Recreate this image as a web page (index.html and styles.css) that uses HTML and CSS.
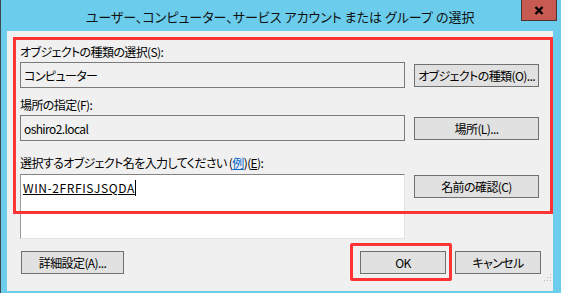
FILE: index.html
```html
<!DOCTYPE html>
<html lang="ja">
<head>
    <meta charset="UTF-8">
    <title>ユーザー、コンピューター、サービス アカウント または グループ の選択</title>
    <link rel="stylesheet" href="styles.css">
</head>
<body>
<div class="window">
    <div class="titlebar">
        <span class="title">ユーザー、コンピューター、サービス アカウント または グループ の選択</span>
        <div class="close">
            <svg width="10" height="9" viewBox="0 0 10 9">
                <path d="M1.5 1 L8.5 8 M8.5 1 L1.5 8" stroke="#000" stroke-width="2.4" />
            </svg>
        </div>
    </div>

    <div class="client">
        <div class="section first">
            <div class="label">オブジェクトの種類の選択(S):</div>
            <div class="row">
                <div class="textbox readonly">コンピューター</div>
                <button class="btn">オブジェクトの種類(O)...</button>
            </div>
        </div>

        <div class="section">
            <div class="label">場所の指定(F):</div>
            <div class="row">
                <div class="textbox readonly">oshiro2.local</div>
                <button class="btn">場所(L)...</button>
            </div>
        </div>

        <div class="section third">
            <div class="label">選択するオブジェクト名を入力してください (<a href="#" class="link">例</a>)(<u>E</u>):</div>
            <div class="row top">
                <div class="textbox multi"><span class="resolved">WIN-2FRFISJSQDA</span><span class="caret"></span></div>
                <button class="btn">名前の確認(C)</button>
            </div>
        </div>

        <div class="footer">
            <button class="btn advanced">詳細設定(A)...</button>
            <div class="actions">
                <button class="btn small">OK</button>
                <button class="btn small">キャンセル</button>
            </div>
        </div>

        <!-- 注釈の赤枠 -->
        <div class="highlight box-fields"></div>
        <div class="highlight box-ok"></div>

        <svg class="grip" width="9" height="9" viewBox="0 0 9 9">
            <rect x="7" y="1" width="1" height="1" fill="#b8b8b8" />
            <rect x="4" y="4" width="1" height="1" fill="#b8b8b8" />
            <rect x="7" y="4" width="1" height="1" fill="#b8b8b8" />
            <rect x="1" y="7" width="1" height="1" fill="#b8b8b8" />
            <rect x="4" y="7" width="1" height="1" fill="#b8b8b8" />
            <rect x="7" y="7" width="1" height="1" fill="#b8b8b8" />
        </svg>
    </div>
</div>
</body>
</html>
```

FILE: styles.css
```css
body {
    margin: 0;
    font-family: "Noto Sans CJK JP", sans-serif;
    font-feature-settings: "palt";
    color: #000;
}

.window {
    width: 561px;
    height: 293px;
    box-sizing: border-box;
    background-color: #6bcdeb;
    border-left: 1px solid #3c4a50;
    padding: 0 8px 2px 6px;
}

.titlebar {
    height: 31px;
    position: relative;
    display: flex;
    align-items: center;
    justify-content: center;
    padding-top: 2px;
    box-sizing: border-box;
}

.title {
    font-size: 13px;
    color: #111;
    white-space: nowrap;
}

.close {
    position: absolute;
    top: 0;
    right: -4px;
    width: 36px;
    height: 21px;
    box-sizing: border-box;
    background-color: #c75b52;
    border: 1px solid #4d3431;
    border-top: none;
    display: flex;
    align-items: center;
    justify-content: center;
}

.client {
    position: relative;
    height: 260px;
    background-color: #f0f0f0;
    padding: 13px 0 0 13px;
    box-sizing: border-box;
    font-size: 12px;
    letter-spacing: -0.6px;
}

.label {
    line-height: 16px;
    margin-bottom: 2px;
    white-space: nowrap;
}

.section {
    margin-top: 9px;
}

.section.first {
    margin-top: 0;
}

.section.third {
    margin-top: 14px;
}

.section.third .label {
    margin-bottom: 3px;
}

.row {
    display: grid;
    grid-template-columns: 385px 125px;
    column-gap: 9px;
    align-items: center;
}

.row.top {
    align-items: start;
}

.textbox {
    height: 26px;
    box-sizing: border-box;
    padding: 0 3px;
    display: flex;
    align-items: center;
    white-space: nowrap;
}

.textbox.readonly {
    background-color: #f0f0f0;
    border: 1px solid #7a7a7a;
}

.textbox.multi {
    height: 65px;
    align-items: flex-start;
    padding-top: 5px;
    padding-left: 2px;
    background-color: #fff;
    border: 1px solid;
    border-color: #828282 #e3e3e3 #e3e3e3 #9a9a9a;
}

.resolved {
    text-decoration: underline;
    line-height: 16px;
    letter-spacing: 0.6px;
}

.caret {
    display: inline-block;
    width: 1px;
    height: 16px;
    background-color: #000;
}

.link {
    color: #0066cc;
}

.btn {
    height: 23px;
    box-sizing: border-box;
    background-color: #e1e1e1;
    border: 1px solid #707070;
    font-family: inherit;
    font-feature-settings: "palt";
    font-size: 12px;
    letter-spacing: -0.6px;
    color: #000;
    padding: 0;
    margin: 0;
    white-space: nowrap;
}

.row .btn {
    margin-top: 1px;
}

.footer {
    display: flex;
    justify-content: space-between;
    margin-top: 12px;
    padding-left: 1px;
    width: 520px;
}

.advanced {
    width: 103px;
}

.actions {
    display: flex;
    gap: 9px;
}

.btn.small {
    width: 86px;
}

.highlight {
    position: absolute;
    box-sizing: border-box;
    border: 3px solid #ff3333;
}

.box-fields {
    left: 6px;
    top: 6px;
    width: 540px;
    height: 177px;
}

.box-ok {
    left: 343px;
    top: 212px;
    width: 102px;
    height: 38px;
    border-radius: 2px;
}

.grip {
    position: absolute;
    right: 1px;
    bottom: 9px;
}
```
